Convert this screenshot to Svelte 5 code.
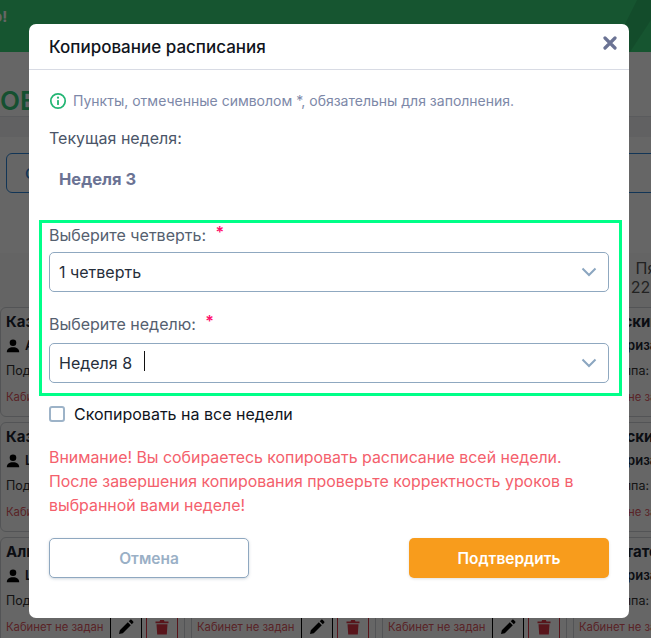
<script lang="ts">
	const lessons = [
		[
			{ title: 'Казахский язык', teacher: 'Айгуль М.' },
			{ title: 'Математика', teacher: 'Дана К.' },
			{ title: 'Физика', teacher: 'Ерлан С.' },
			{ title: 'Казахский язык', teacher: 'Гульриза Т.' }
		],
		[
			{ title: 'Казахский язык', teacher: 'Шолпан А.' },
			{ title: 'История', teacher: 'Марат Б.' },
			{ title: 'Химия', teacher: 'Жанар Е.' },
			{ title: 'Испанский язык', teacher: 'Гульриза Т.' }
		],
		[
			{ title: 'Алгебра', teacher: 'Шолпан А.' },
			{ title: 'Биология', teacher: 'Асель Н.' },
			{ title: 'География', teacher: 'Нурлан О.' },
			{ title: 'Воспитательный час', teacher: 'Гульриза Т.' }
		]
	];
</script>

<div class="page">
	<header class="topbar">
		<span class="greeting">о!</span>
		<svg class="stripe" width="40" height="52" viewBox="0 0 40 52"><polygon points="26,0 40,0 40,20 19,52 0,52" fill="#000" opacity="0.1" /></svg>
	</header>
	<h1 class="page-title">ОВ</h1>
	<div class="tabs-band"></div>
	<div class="toolbar"><button class="outline">Скопировать</button></div>
	<div class="days">
		<div class="day"></div>
		<div class="day"></div>
		<div class="day"></div>
		<div class="day">Пятница<br />22.11.24 г.</div>
	</div>
	<div class="grid">
		{#each lessons as row}
			{#each row as item}
				<article class="card">
					<div class="card-title">{item.title}</div>
					<div class="teacher">
						<svg width="14" height="14" viewBox="0 0 14 14"><circle cx="7" cy="3.8" r="3.3" fill="#000" /><path d="M0.8 13.2c0-3.4 2.4-5 6.2-5s6.2 1.6 6.2 5z" fill="#000" /></svg>
						<span>{item.teacher}</span>
					</div>
					<div class="subgroup">Подгруппа: <span>Вся</span></div>
					<div class="room">
						<span class="room-name">Кабинет не задан</span>
						<span class="action edit">
							<svg width="16" height="16" viewBox="0 0 16 16"><path d="M1 15l.8-3.8 8-8 3 3-8 8zM10.8 2.2l1.4-1.4a1 1 0 0 1 1.4 0l1.6 1.6a1 1 0 0 1 0 1.4l-1.4 1.4z" fill="#000" /></svg>
						</span>
						<span class="action remove">
							<svg width="14" height="16" viewBox="0 0 14 16"><path d="M0.5 2.5h4l.6-1.5h3.8l.6 1.5h4v1.8h-13zM1.5 5.3h11l-.7 10.2h-9.6z" fill="#dc3545" /></svg>
						</span>
					</div>
				</article>
			{/each}
		{/each}
	</div>

	<div class="overlay">
		<div class="modal">
			<div class="modal-head">
				<h2>Копирование расписания</h2>
				<svg class="close" width="14" height="14" viewBox="0 0 14 14"><path d="M2 2l10 10M12 2L2 12" stroke="#6b7394" stroke-width="3.2" stroke-linecap="round" fill="none" /></svg>
			</div>
			<div class="modal-body">
				<p class="note">
					<svg width="18" height="18" viewBox="0 0 18 18"><circle cx="9" cy="9" r="7.2" fill="none" stroke="#22b573" stroke-width="1.7" /><rect x="8.1" y="8" width="1.8" height="5" rx="0.5" fill="#22b573" /><circle cx="9" cy="5.7" r="1.1" fill="#22b573" /></svg>
					Пункты, отмеченные символом *, обязательны для заполнения.
				</p>
				<p class="current-label">Текущая неделя:</p>
				<p class="current-week">Неделя 3</p>

				<div class="highlight">
					<label class="field-label" for="quarter">Выберите четверть: <i>*</i></label>
					<div class="select" id="quarter">
						<span>1 четверть</span>
						<svg width="16" height="10" viewBox="0 0 16 10"><path d="M1.5 1.5L8 8l6.5-6.5" fill="none" stroke="#8ba6c0" stroke-width="2" /></svg>
					</div>
					<label class="field-label second" for="week">Выберите неделю: <i>*</i></label>
					<div class="select" id="week">
						<span class="value">Неделя 8<b class="caret"></b></span>
						<svg width="16" height="10" viewBox="0 0 16 10"><path d="M1.5 1.5L8 8l6.5-6.5" fill="none" stroke="#8ba6c0" stroke-width="2" /></svg>
					</div>
				</div>

				<label class="check">
					<input type="checkbox" />
					Скопировать на все недели
				</label>

				<p class="warning">
					Внимание! Вы собираетесь копировать расписание всей недели.<br />
					После завершения копирования проверьте корректность уроков в<br />
					выбранной вами неделе!
				</p>

				<div class="actions">
					<button class="cancel">Отмена</button>
					<button class="confirm">Подтвердить</button>
				</div>
			</div>
		</div>
	</div>
</div>

<style>
	:global(body) {
		margin: 0;
		font-family: Inter, "Noto Sans", sans-serif;
	}
	.page {
		position: relative;
		width: 651px;
		height: 638px;
		overflow: hidden;
		background: #fff;
		color: #1c2430;
	}
	.topbar {
		position: relative;
		height: 52px;
		background: #37d478;
		overflow: hidden;
	}
	.greeting {
		display: block;
		margin-left: -7px;
		padding-top: 7px;
		color: #fff;
		font-size: 15px;
		font-weight: 700;
	}
	.stripe {
		position: absolute;
		right: 0;
		top: 0;
	}
	.page-title {
		box-sizing: border-box;
		height: 65px;
		margin: 0;
		padding-top: 34px;
		border-bottom: 1px solid #e2e4e8;
		color: #35c878;
		font-size: 26px;
		line-height: 30px;
		font-weight: 600;
	}
	.tabs-band {
		height: 20px;
		background: #f3f3f5;
	}
	.toolbar {
		height: 116px;
		padding: 16px 0 0 6px;
		box-sizing: border-box;
	}
	.outline {
		width: 700px;
		height: 40px;
		padding: 0 18px;
		background: #fff;
		border: 1px solid #2f86d8;
		border-radius: 6px;
		color: #2f86d8;
		font: 500 15px Inter, sans-serif;
		text-align: left;
	}
	.days {
		display: grid;
		grid-template-columns: repeat(4, 185px);
		gap: 6px;
		height: 54px;
		background: #fafafa;
	}
	.day {
		padding: 6px 0 0 6px;
		color: #555;
		font-size: 16px;
		line-height: 19px;
		text-align: center;
		white-space: nowrap;
	}
	.grid {
		display: grid;
		grid-template-columns: repeat(4, 185px);
		grid-auto-rows: 110px;
		gap: 5px 6px;
		width: 780px;
	}
	.card {
		box-sizing: border-box;
		height: 110px;
		padding: 5px 0 0 5px;
		border: 1px solid #cfd2d6;
		border-radius: 6px;
		white-space: nowrap;
		overflow: hidden;
	}
	.card-title {
		font-size: 15px;
		line-height: 18px;
		font-weight: 700;
	}
	.teacher {
		display: flex;
		align-items: center;
		gap: 5px;
		margin-top: 6px;
		font-size: 13px;
		line-height: 17px;
		font-weight: 600;
	}
	.subgroup {
		margin-top: 8px;
		font-size: 12.5px;
		line-height: 17px;
		color: #333;
	}
	.subgroup span { color: #b8860b; }
	.room {
		display: flex;
		align-items: center;
		margin-top: 6px;
		height: 24px;
	}
	.room-name {
		width: 104px;
		color: #e0585f;
		font-size: 11.3px;
	}
	.action {
		display: flex;
		align-items: center;
		justify-content: center;
		box-sizing: border-box;
		width: 32px;
		height: 28px;
	}
	.edit { border-left: 1px solid #000; border-right: 1px solid #000; }
	.remove {
		margin-left: 4px;
		border-left: 1px solid #dc3545;
		border-right: 1px solid #dc3545;
	}

	.overlay {
		position: absolute;
		inset: 0;
		background: rgba(0, 0, 0, 0.6);
		padding: 24px 0 0 29px;
		box-sizing: border-box;
	}
	.modal {
		width: 600px;
		height: 594px;
		background: #fff;
		border-radius: 7px;
	}
	.modal-head {
		display: flex;
		align-items: center;
		justify-content: space-between;
		box-sizing: border-box;
		height: 46px;
		padding: 0 12px 0 20px;
		border-bottom: 1px solid #d8dbe4;
	}
	.modal-head h2 {
		margin: 0;
		color: #10141c;
		font-size: 17px;
		font-weight: 500;
	}
	.close { margin-bottom: 8px; }
	.modal-body { padding: 0 20px; }
	.note {
		display: flex;
		align-items: center;
		gap: 6px;
		margin: 22px 0 0;
		color: #7d88a8;
		font-size: 14px;
		line-height: 18px;
	}
	.current-label {
		margin: 18px 0 0;
		color: #4a5568;
		font-size: 16px;
		line-height: 20px;
	}
	.current-week {
		margin: 21px 0 0 10px;
		color: #6b7394;
		font-size: 16.5px;
		line-height: 20px;
		font-weight: 700;
	}
	.highlight {
		margin: 31px -13px 0 -10px;
		padding: 2px 10px 10px 7px;
		border: 3px solid #00ff88;
	}
	.field-label {
		display: block;
		height: 20px;
		color: #55606f;
		font-size: 16px;
		line-height: 20px;
		margin-bottom: 7px;
	}
	.field-label.second { margin-top: 22px; margin-bottom: 9px; }
	.field-label i {
		position: relative;
		top: -3px;
		margin-left: 5px;
		color: #ff0f6c;
		font-style: normal;
		font-weight: 600;
	}
	.select {
		display: flex;
		align-items: center;
		justify-content: space-between;
		box-sizing: border-box;
		height: 40px;
		padding: 0 11px 0 9px;
		border: 1px solid #8fa8c0;
		border-radius: 5px;
		color: #262e3a;
		font-size: 16px;
	}
	.value { position: relative; }
	.caret {
		position: absolute;
		left: 85px;
		top: -2px;
		width: 1px;
		height: 20px;
		background: #111;
	}
	.check {
		display: flex;
		align-items: center;
		gap: 9px;
		margin-top: 8px;
		color: #10141c;
		font-size: 16px;
		line-height: 20px;
	}
	.check input {
		appearance: none;
		box-sizing: border-box;
		width: 16px;
		height: 16px;
		margin: 0;
		border: 2px solid #9db3c8;
		border-radius: 3px;
		background: #fff;
	}
	.warning {
		margin: 22px 0 0;
		color: #f4606c;
		font-size: 15.9px;
		line-height: 24px;
		white-space: nowrap;
	}
	.actions {
		display: flex;
		justify-content: space-between;
		margin-top: 20px;
	}
	.actions button {
		width: 200px;
		height: 40px;
		border-radius: 5px;
		font: 600 15.5px Inter, sans-serif;
	}
	.cancel {
		background: #fff;
		border: 1px solid #8fa8c0;
		color: #9ab0c6;
		box-shadow: 0 1px 3px rgba(120, 140, 160, 0.35);
	}
	.confirm {
		background: #f89c1c;
		border: none;
		color: #fff;
		box-shadow: 0 1px 3px rgba(0, 0, 0, 0.12);
	}
</style>
